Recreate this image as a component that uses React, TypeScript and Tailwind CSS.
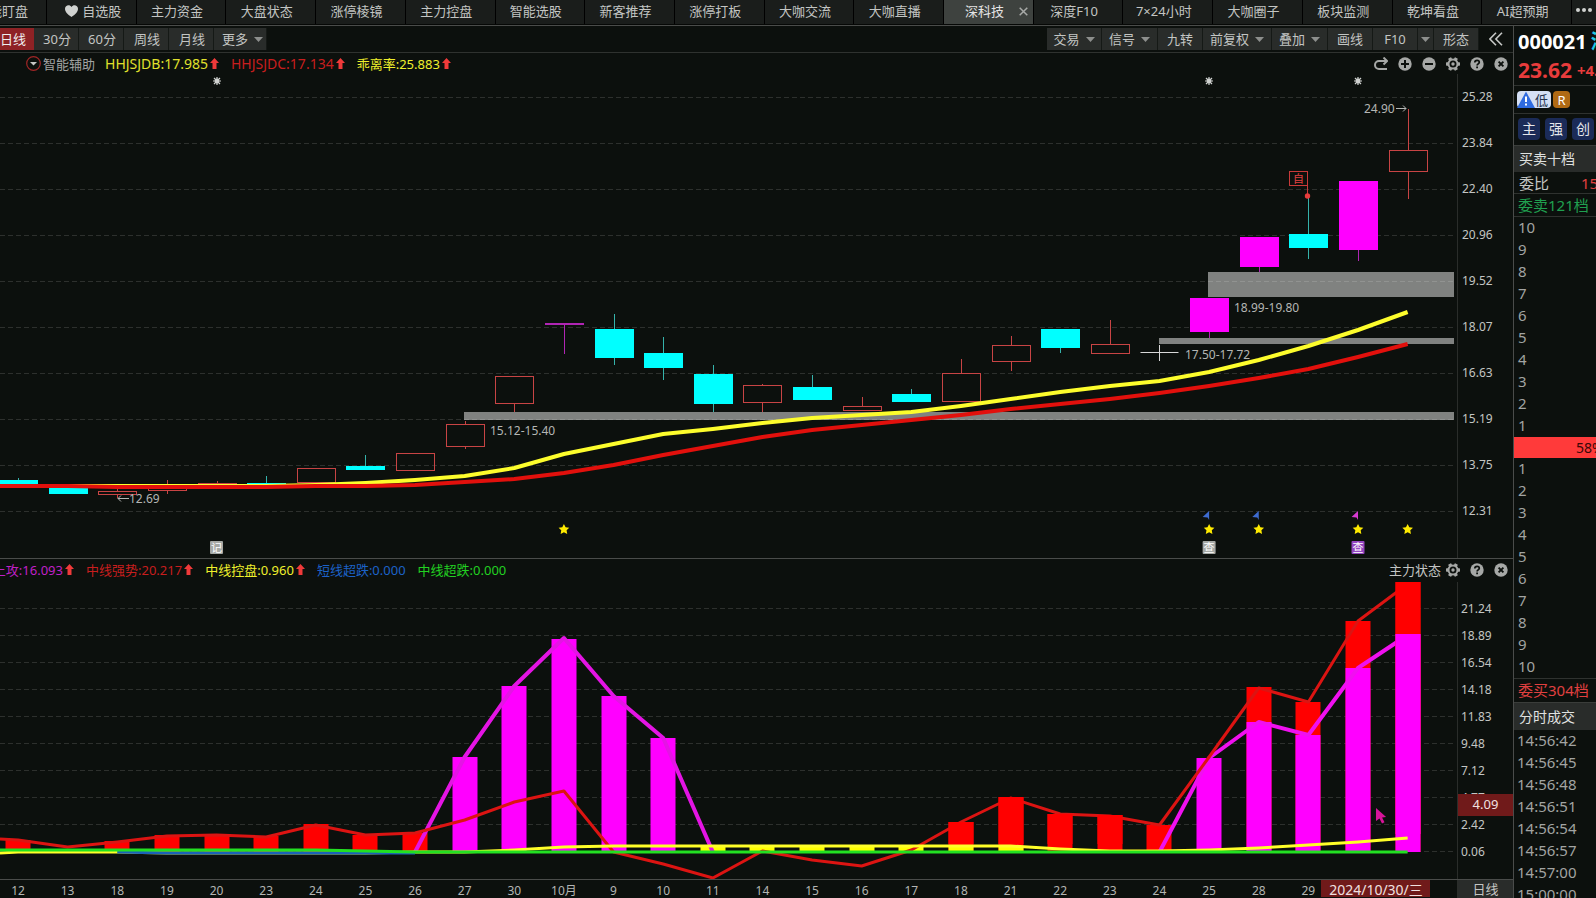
import type { ReactNode } from "react"
import clsx from "clsx"

const STEP = 49.63
const cx = (i: number) => 18 + STEP * i

type Kind = "up" | "down" | "limit" | "flat"
// [kind, high, body top, body bottom, low]
const CANDLES: [Kind, number, number, number, number][] = [
  ["down", 478, 480, 484, 484],
  ["down", 488, 488, 494, 494],
  ["up", 488, 491, 495, 498],
  ["up", 480, 487, 491, 494],
  ["up", 481, 483, 487, 487],
  ["down", 476, 483, 485, 485],
  ["up", 468, 468, 483, 483],
  ["down", 455, 466, 470, 470],
  ["up", 453, 453, 471, 471],
  ["up", 421, 424, 447, 449],
  ["up", 376, 376, 404, 412],
  ["limit", 323, 323, 325, 354],
  ["down", 314, 329, 358, 365],
  ["down", 337, 353, 368, 380],
  ["down", 365, 374, 404, 412],
  ["up", 384, 385, 403, 412],
  ["down", 375, 387, 400, 400],
  ["up", 397, 406, 411, 411],
  ["down", 389, 394, 402, 402],
  ["up", 359, 373, 402, 402],
  ["up", 336, 345, 362, 371],
  ["down", 329, 329, 348, 353],
  ["up", 320, 344, 354, 354],
  ["flat", 345, 352, 352, 361],
  ["limit", 298, 298, 332, 338],
  ["limit", 237, 237, 267, 272],
  ["down", 198, 234, 248, 259],
  ["limit", 181, 181, 250, 261],
  ["up", 109, 150, 172, 199],
]

const MA_FAST = [
  486, 486, 486, 486, 486, 486, 485, 483, 480, 476, 468, 454, 444, 434, 429, 423, 418, 415, 412,
  406, 399, 392, 386, 381, 372, 360, 346, 330, 312,
]
const MA_SLOW = [
  486, 486, 487, 487, 487, 487, 486, 486, 485, 482, 479, 473, 465, 455, 446, 437, 430, 425, 420,
  415, 409, 404, 399, 393, 386, 378, 369, 357, 344,
]

const BASE = 852
// [column, top, colour], painted in order
const BARS: [number, number, string][] = [
  [0, 840, "#f00"], [2, 841, "#f00"], [3, 835, "#f00"], [4, 834, "#f00"], [5, 836, "#f00"],
  [6, 824, "#f00"], [7, 835, "#f00"], [8, 833, "#f00"],
  [9, 757, "#f0f"], [10, 686, "#f0f"], [11, 639, "#f0f"], [12, 696, "#f0f"], [13, 738, "#f0f"],
  [14, 846, "#ff0"], [15, 846, "#ff0"], [16, 846, "#ff0"], [17, 846, "#ff0"], [18, 846, "#ff0"],
  [19, 822, "#f00"], [20, 797, "#f00"], [19, 846, "#ff0"], [20, 846, "#ff0"],
  [21, 814, "#f00"], [22, 815, "#f00"], [23, 825, "#f00"],
  [24, 758, "#f0f"],
  [25, 687, "#f00"], [25, 722, "#f0f"],
  [26, 702, "#f00"], [26, 735, "#f0f"],
  [27, 621, "#f00"], [27, 668, "#f0f"],
  [28, 582, "#f00"], [28, 634, "#f0f"],
]
const STRONG = [
  840, 847, 842, 836, 835, 837, 825, 835, 833, 820, 802, 791, 852, 864, 878, 851, 860, 866, 850,
  822, 798, 814, 816, 825, 757, 688, 702, 621, 584,
]
const CONTROL = [
  852, 852, 852, 853, 853, 853, 853, 853, 852, 852, 850, 847, 846, 846, 846, 846, 846, 846, 846,
  846, 846, 849, 851, 851, 850, 848, 845, 842, 838,
]
const OVERSOLD = [
  850, 850, 850, 850, 850, 850, 850, 851, 852, 852, 852, 852, 852, 852, 852, 852, 852, 852, 852,
  852, 852, 852, 852, 852, 852, 852, 852, 852, 852,
]

const line = (ys: number[], from = 0) => ys.map((y, i) => `${cx(i + from)},${y}`).join(" ")

const DATES = [
  "12", "13", "18", "19", "20", "23", "24", "25", "26", "27", "30", "10月", "9", "10", "11", "14",
  "15", "16", "17", "18", "21", "22", "23", "24", "25", "28", "29",
]

const TABS = [
  "自选股", "主力资金", "大盘状态", "涨停棱镜", "主力控盘", "智能选股", "新客推荐", "涨停打板",
  "大咖交流", "大咖直播", "深科技", "深度F10", "7×24小时", "大咖圈子", "板块监测", "乾坤看盘",
  "AI超预期",
]

const PRICES = ["25.28", "23.84", "22.40", "20.96", "19.52", "18.07", "16.63", "15.19", "13.75", "12.31"]
const LEVELS = ["21.24", "18.89", "16.54", "14.18", "11.83", "9.48", "7.12", "4.77", "2.42", "0.06"]
const TIMES = [
  "14:56:42", "14:56:45", "14:56:48", "14:56:51", "14:56:54", "14:56:57", "14:57:00", "15:00:00",
]

function Caret() {
  return (
    <svg className="h-[5px] w-[9px] shrink-0" viewBox="0 0 9 5" aria-hidden="true">
      <path d="M0 0h9L4.500 5z" fill="#8d8f8d" />
    </svg>
  )
}

function UpArrow() {
  return (
    <svg className="h-[11px] w-[9px] shrink-0" viewBox="0 0 9 11" aria-hidden="true">
      <path d="M4.500 0 9 5H6.500v6h-4V5H0z" fill="#f03a3a" />
    </svg>
  )
}

function IconButton({ label, children }: { label: string; children: ReactNode }) {
  return (
    <button aria-label={label} className="flex h-5 w-6 items-center justify-center">
      <svg className="size-[14px]" viewBox="0 0 14 14" fill="none" aria-hidden="true">
        {children}
      </svg>
    </button>
  )
}

function Gear() {
  return (
    <IconButton label="设置">
      <circle cx="7" cy="7" r="4.500" stroke="#a6a8a6" strokeWidth="2" />
      <circle cx="7" cy="7" r="1.700" fill="#a6a8a6" />
      {[0, 60, 120, 180, 240, 300].map((a) => (
        <rect key={a} x="5.300" y="0" width="3.400" height="2.600" rx="0.600" fill="#a6a8a6" transform={`rotate(${a + 30} 7 7)`} />
      ))}
    </IconButton>
  )
}

function Help() {
  return (
    <IconButton label="帮助">
      <circle cx="7" cy="7" r="6.700" fill="#a6a8a6" />
      <path d="M4.800 5.600c0-3 4.500-3 4.500-.3 0 1.500-2.200 1.600-2.200 3.100" stroke="#0c100d" strokeWidth="1.700" />
      <path d="M7.100 9.500v1.800" stroke="#0c100d" strokeWidth="1.800" />
    </IconButton>
  )
}

function Close() {
  return (
    <IconButton label="关闭">
      <circle cx="7" cy="7" r="6.700" fill="#a6a8a6" />
      <path d="m4.600 4.600 4.800 4.800m0-4.800-4.800 4.800" stroke="#0c100d" strokeWidth="1.900" />
    </IconButton>
  )
}

function Legend({ color, children, up }: { color: string; children: ReactNode; up?: boolean }) {
  return (
    <span className={clsx("flex items-center gap-[2px] whitespace-nowrap", color)}>
      {children}
      {up && <UpArrow />}
    </span>
  )
}

function Tool({ width, children, menu }: { width: string; children?: ReactNode; menu?: boolean }) {
  return (
    <button
      className={clsx(
        "flex h-[22px] shrink-0 items-center justify-center gap-[6px] overflow-hidden border-r border-[#151916] bg-[#292c2a] whitespace-nowrap",
        width,
      )}
    >
      {children}
      {menu && <Caret />}
    </button>
  )
}

function TabBar() {
  return (
    <nav className="flex h-[26px] border-b border-[#4a4c4a] bg-[#060806] pb-px">
      <button className="flex w-[47px] shrink-0 items-center justify-end overflow-hidden border-r border-black bg-[#1a1d1b] pr-[18px] pb-0.5 whitespace-nowrap">
        智能盯盘
      </button>
      {TABS.map((tab) => {
        const current = tab === "深科技"
        return (
          <button
            key={tab}
            className={clsx(
              "relative flex min-w-0 flex-1 items-center justify-center gap-1 overflow-hidden border-r border-black pb-0.5 whitespace-nowrap",
              current ? "bg-[#3e423f] text-[#e4e4e4]" : "bg-[#1a1d1b]",
              tab === "自选股" ? "pr-[2px] pl-[6px]" : "pr-[8px]",
            )}
          >
            {tab === "自选股" && (
              <svg className="h-3 w-[13px]" viewBox="0 0 13 12" aria-hidden="true">
                <path d="M6.500 12C3 9.500 0 7 0 3.700 0 .2 4.700-1.200 6.500 2 8.300-1.200 13 .2 13 3.700 13 7 10 9.500 6.500 12Z" fill="#d0d2d0" />
              </svg>
            )}
            {tab}
            {current && (
              <svg className="absolute right-[5px] size-[9px]" viewBox="0 0 9 9" aria-hidden="true">
                <path d="m.7.7 7.600 7.600m0-7.600L.7 8.300" stroke="#a8aaa8" strokeWidth="1.500" />
              </svg>
            )}
          </button>
        )
      })}
      <button aria-label="更多标签" className="flex w-6 shrink-0 items-center gap-[2px] overflow-hidden bg-[#1a1d1b] pb-1 pl-1">
        {[0, 1, 2].map((i) => (
          <span key={i} className="size-1 shrink-0 rounded-full bg-[#d0d2d0]" />
        ))}
      </button>
    </nav>
  )
}

function Toolbar() {
  return (
    <div className="flex h-[27px] items-center border-b border-[#2f322f]">
      <button className="flex h-[22px] w-[34px] shrink-0 items-center justify-end overflow-hidden bg-[#8e2225] pr-[8px] whitespace-nowrap text-[#eee]">
        日线
      </button>
      <Tool width="w-[45px] pl-[2px]">30分</Tool>
      <Tool width="w-[45px] pl-[2px]">60分</Tool>
      <Tool width="w-[45px] pl-[2px]">周线</Tool>
      <Tool width="w-[45px] pl-[2px]">月线</Tool>
      <Tool width="w-[53px] pl-[5px]" menu>更多</Tool>
      <div className="flex-1" />
      <Tool width="w-[55px]" menu>交易</Tool>
      <Tool width="w-[56px]" menu>信号</Tool>
      <Tool width="w-[45px]">九转</Tool>
      <Tool width="w-[69px]" menu>前复权</Tool>
      <Tool width="w-[56px]" menu>叠加</Tool>
      <Tool width="w-[45px]">画线</Tool>
      <Tool width="w-[45px]">F10</Tool>
      <Tool width="w-[16px]" menu />
      <Tool width="w-[45px]">形态</Tool>
      <button aria-label="收起" className="flex w-[34px] justify-center">
        <svg className="size-[14px]" viewBox="0 0 14 14" fill="none" stroke="#c6c8c6" strokeWidth="1.600" aria-hidden="true">
          <path d="M7 .8.9 7 7 13.200M13 .8 6.900 7l6.100 6.200" />
        </svg>
      </button>
    </div>
  )
}

const INK: Record<Kind, string> = { up: "#c84444", down: "#0ff", limit: "#f0f", flat: "#d8d8d8" }
const WICK: Record<Kind, string> = { up: "#c84444", down: "#35b3ab", limit: "#b025b4", flat: "#d8d8d8" }

function Candle({ i }: { i: number }) {
  const [kind, high, top, bottom, low] = CANDLES[i]
  const x = Math.round(cx(i)) + 0.5
  return (
    <g>
      <path d={`M${x} ${high}V${top}M${x} ${bottom}V${low}`} stroke={WICK[kind]} />
      {kind === "up" && (
        <rect x={x - 19} y={top + 0.5} width="38" height={bottom - top - 1} fill="none" stroke={INK.up} />
      )}
      {(kind === "down" || kind === "limit") && (
        <rect x={x - 19.5} y={top} width="39" height={bottom - top} fill={i === 11 ? WICK.limit : INK[kind]} />
      )}
      {kind === "flat" && <path d={`M${x - 19} ${top + 0.5}h38`} stroke={INK.flat} />}
    </g>
  )
}

function Burst({ x }: { x: number }) {
  return (
    <g stroke="#d0d2d0" strokeWidth="1.200">
      <path d={`M${x - 4} 81h8M${x} 77v8M${x - 3} 78l6 6M${x + 3} 78l-6 6`} />
      <circle cx={x} cy="81" r="1.800" fill="#d0d2d0" />
    </g>
  )
}

function Star({ x }: { x: number }) {
  const pts = Array.from({ length: 10 }, (_, k) => {
    const r = k % 2 ? 2.8 : 5.6
    const a = (Math.PI / 5) * k - Math.PI / 2
    return `${x + r * Math.cos(a)},${529.5 + r * Math.sin(a)}`
  })
  return <polygon points={pts.join(" ")} fill="#ffeb00" />
}

function Badge({ x, fill, children }: { x: number; fill: string; children: string }) {
  return (
    <g>
      <rect x={x - 6.5} y="541" width="13" height="13" rx="1" fill={fill} />
      <text x={x} y="551.500" fontSize="11" textAnchor="middle" fill="#fff">{children}</text>
    </g>
  )
}

function PriceChart() {
  return (
    <svg className="block h-auto w-full min-w-0 flex-1" viewBox="0 74 1457 484" role="img" aria-label="K线图">
      <g stroke="#2d302d" strokeDasharray="5 3">
        {PRICES.map((p, i) => (
          <path key={p} d={`M0 ${97.5 + i * 46}H1453`} />
        ))}
      </g>
      <g fill="#fff" fillOpacity="0.48">
        <rect x="464" y="412" width="990" height="8" />
        <rect x="1159" y="338" width="295" height="6" />
        <rect x="1208" y="272" width="246" height="25" />
      </g>
      {CANDLES.map((_, i) => (
        <Candle key={i} i={i} />
      ))}
      <g fontSize="12" fill="#b4b6b4">
        <text x="490" y="435">15.12-15.40</text>
        <text x="1234" y="312">18.99-19.80</text>
        <text x="1185" y="359">17.50-17.72</text>
        <text x="1364" y="113">24.90</text>
        <text x="129" y="503">12.69</text>
      </g>
      <path d="M1396 108.500h10m-3-3 3 3-3 3M129 498.500h-11m3-3-3 3 3 3" fill="none" stroke="#b4b6b4" />
      <g fill="none" strokeWidth="4" strokeLinejoin="round">
        <polyline points={`0,486 ${line(MA_FAST)}`} stroke="#fdfd2c" />
        <polyline points={`0,486 ${line(MA_SLOW)}`} stroke="#e2100c" />
      </g>
      <rect x="1289.500" y="171.500" width="18" height="14" fill="none" stroke="#c83a3a" />
      <path d="M1307.500 185v10" stroke="#c83a3a" />
      <circle cx="1307.500" cy="196" r="2.700" fill="#e83c3c" />
      <text x="1298.500" y="182.500" fontSize="11" textAnchor="middle" fill="#e04040">自</text>
      {[4, 24, 27].map((i) => (
        <Burst key={i} x={Math.round(cx(i))} />
      ))}
      {[11, 24, 25, 27, 28].map((i) => (
        <Star key={i} x={cx(i)} />
      ))}
      {[24, 25, 27].map((i) => (
        <path key={i} d={`M${cx(i)} 511v9l-1.500-2.500-5-.500z`} fill={i === 27 ? "#d63ad0" : "#3d6bd0"} />
      ))}
      <Badge x={cx(4)} fill="#a5a8a5">记</Badge>
      <Badge x={cx(24)} fill="#a5a8a5">查</Badge>
      <Badge x={cx(27)} fill="#9446c0">查</Badge>
    </svg>
  )
}

function StateChart() {
  return (
    <svg className="block h-auto w-full min-w-0 flex-1" viewBox="0 582 1457 297" role="img" aria-label="主力状态图">
      <g stroke="#2d302d" strokeDasharray="5 3">
        {LEVELS.map((p, i) => (
          <path key={p} d={`M0 ${608.5 + i * 27}H1453`} />
        ))}
      </g>
      {BARS.map(([i, top, fill], k) => (
        <rect key={k} x={Math.round(cx(i)) - 12.5} y={top} width="25" height={BASE - top} fill={fill} />
      ))}
      <g fill="none" strokeLinejoin="round">
        <polyline points={line([852, 757, 686, 638, 696, 738, 852], 8)} stroke="#e414e4" strokeWidth="4" />
        <polyline points={line([852, 758, 722, 735, 668, 635], 23)} stroke="#f010f0" strokeWidth="4" />
        <polyline points={`0,839 ${line(STRONG)}`} stroke="#dc1412" strokeWidth="3" />
        <polyline points={`0,853 ${line(CONTROL)}`} stroke="#ffff28" strokeWidth="3" />
        <polyline points={line([852, 853, 853, 853, 853, 853, 853], 2)} stroke="#1b62b8" strokeWidth="3" />
        <polyline points={`0,850 ${line(OVERSOLD)}`} stroke="#22e022" strokeWidth="3" />
      </g>
      {/* bars that sit above the red line */}
      {BARS.filter(([i, , fill]) => i === 28 || (i > 18 && i < 23 && fill === "#f00")).map(([i, top, fill], k) => (
        <rect key={k} x={Math.round(cx(i)) - 12.5} y={top} width="25" height={(i === 28 ? 834 : 844) - top} fill={fill} />
      ))}
      <path d="M1376 808v13l3.500-2.500 2.500 5 2.500-1.200-2.400-4.800 4-.5z" fill="#d8149a" />
    </svg>
  )
}

function DateAxis() {
  return (
    <svg className="block h-auto w-full min-w-0 flex-1" viewBox="0 0 1457 18" fontSize="12" textAnchor="middle" fill="#b4b6b4">
      {DATES.map((d, i) => (
        <text key={i} x={cx(i)} y="15">{d}</text>
      ))}
      <rect x="1321" y="0" width="109" height="17" fill="#701a1a" />
      <text x="1376" y="15" fontSize="14" fill="#f0e0e0">2024/10/30/三</text>
    </svg>
  )
}

function Depth({ levels }: { levels: number[] }) {
  return (
    <ul className="text-[15px] text-[#a2a4a2]">
      {levels.map((n) => (
        <li key={n} className="flex h-[22px] items-center pb-0.5 pl-1">{n}</li>
      ))}
    </ul>
  )
}

function Quote() {
  const down = [10, 9, 8, 7, 6, 5, 4, 3, 2, 1]
  return (
    <aside className="w-[83px] shrink-0 overflow-hidden border-l border-[#4a4c4a] whitespace-nowrap">
      <div className="flex h-8 items-center pl-1 text-xl font-bold text-white">
        000021<span className="pl-1 text-[#20c8e8]">深科技</span>
      </div>
      <div className="flex h-7 items-center gap-[5px] border-b border-[#2f322f] pb-1 pl-1 font-bold text-[#e83c3c]">
        <span className="text-[21px]">23.62</span>
        <span className="text-[15px]">+4.47%</span>
      </div>
      <div className="flex h-7 items-center gap-[2px] border-b border-[#2f322f] pl-[3px]">
        <span className="flex h-[17px] w-[34px] items-center rounded-sm bg-[#d4dff4] text-[13px] text-[#26344e]">
          <svg className="h-[17px] w-[18px] shrink-0" viewBox="0 0 18 17" aria-hidden="true">
            <path d="M9 .5 18 17H0z" fill="#2f6be0" />
            <path d="M9 5.500v5.500M9 12.500v2" stroke="#fff" strokeWidth="2" />
          </svg>
          低
        </span>
        <span className="flex size-[17px] items-center justify-center rounded-sm bg-[#b06a14] text-[13px] text-white">R</span>
      </div>
      <div className="flex h-[31px] items-center gap-[5px] pb-0.5 pl-1 text-sm text-[#e4e6ea]">
        {["主", "强", "创"].map((t) => (
          <button key={t} className="flex size-[22px] shrink-0 items-center justify-center rounded-sm bg-[#1b2b58]">{t}</button>
        ))}
      </div>
      <h2 className="flex h-[27px] items-center border-t border-[#3a3d3a] bg-[#292c2a] pl-[5px] text-sm text-[#e0e2e0]">买卖十档</h2>
      <div className="flex h-[22px] items-center gap-[32px] border-b border-[#2f322f] pl-[5px] text-[15px]">
        委比<span className="text-[#e04040]">15.36%</span>
      </div>
      <div className="flex h-[23px] items-center border-b border-[#2f322f] pl-1 text-[15px] text-[#20a050]">委卖121档</div>
      <Depth levels={down} />
      <div className="flex h-[21px] items-center bg-[#ff3a3a] pl-[62px] text-sm text-[#3a0808]">58%</div>
      <Depth levels={[...down].reverse()} />
      <div className="flex h-6 items-center border-t border-[#2f322f] pb-0.5 pl-1 text-[15px] text-[#e04040]">委买304档</div>
      <h2 className="flex h-7 items-center border-t border-[#3a3d3a] bg-[#292c2a] pl-[5px] text-sm text-[#e0e2e0]">分时成交</h2>
      <ul className="text-[15px] text-[#a2a4a2]">
        {TIMES.map((t) => (
          <li key={t} className="flex h-[22px] items-center pb-0.5 pl-[3px]">{t}</li>
        ))}
      </ul>
    </aside>
  )
}

export default function App() {
  return (
    <div className="h-screen overflow-hidden bg-[#0c100d] font-['Noto_Sans','Noto_Sans_CJK_SC',sans-serif] text-[13px] leading-5 text-[#c3c5c3]">
      <TabBar />
      <div className="flex">
        <main className="min-w-0 flex-1">
          <Toolbar />

          <section>
            <header className="flex h-[21px] items-center gap-[10px]">
              <span className="flex items-center gap-[2px] pl-[26px] text-[#a2a4a2]">
                <svg className="size-[15px]" viewBox="0 0 15 15" fill="none" aria-hidden="true">
                  <circle cx="7.500" cy="7.500" r="6.800" stroke="#a02626" strokeWidth="1.200" />
                  <path d="M4 6h7L7.500 9.500z" fill="#c6c8c6" />
                </svg>
                智能辅助
              </span>
              <div className="flex gap-3">
                <Legend color="text-sm text-[#e0e02c]" up>HHJSJDB:17.985</Legend>
                <Legend color="text-sm text-[#c81e1e]" up>HHJSJDC:17.134</Legend>
                <Legend color="text-[#f0f02c]" up>乖离率:25.883</Legend>
              </div>
              <div className="flex-1" />
              <div className="flex">
                <IconButton label="撤销">
                  <path d="M13 4H5a3.600 3.600 0 0 0 0 8h8M9.500.5 13.200 4 9.500 7.500" stroke="#a6a8a6" strokeWidth="2" />
                </IconButton>
                <IconButton label="放大">
                  <circle cx="7" cy="7" r="6.700" fill="#a6a8a6" />
                  <path d="M7 3v8M3 7h8" stroke="#0c100d" strokeWidth="2" />
                </IconButton>
                <IconButton label="缩小">
                  <circle cx="7" cy="7" r="6.700" fill="#a6a8a6" />
                  <path d="M3 7h8" stroke="#0c100d" strokeWidth="2" />
                </IconButton>
                <Gear />
                <Help />
                <Close />
              </div>
            </header>
            <div className="flex">
              <PriceChart />
              <div className="w-14 shrink-0 border-l border-[#2a2d2a] pl-1 text-xs">
                {PRICES.map((p) => (
                  <div key={p} className="flex h-[46px] items-center">{p}</div>
                ))}
              </div>
            </div>
          </section>

          <section className="border-t border-[#4a4c4a]">
            <header className="flex h-[23px] items-center gap-3 pb-0.5">
              <div className="flex w-[74px] justify-end overflow-hidden">
                <Legend color="text-[#c020c8]" up>上攻:16.093</Legend>
              </div>
              <Legend color="text-[#c81e1e]" up>中线强势:20.217</Legend>
              <Legend color="text-[#f0f02c]" up>中线控盘:0.960</Legend>
              <Legend color="text-[#1c62c8]">短线超跌:0.000</Legend>
              <Legend color="text-[#22d022]">中线超跌:0.000</Legend>
              <div className="flex-1" />
              <div className="flex">
                主力状态
                <Gear />
                <Help />
                <Close />
              </div>
            </header>
            <div className="flex">
              <StateChart />
              <div className="relative w-14 shrink-0 border-l border-[#2a2d2a] pt-[13px] pl-[3px] text-xs">
                {LEVELS.map((p) => (
                  <div key={p} className="flex h-[27px] items-center">{p}</div>
                ))}
                <div className="absolute top-[212px] right-0 left-0 flex h-[22px] items-center justify-center bg-[#701a1a] text-[13px] text-[#f0e0e0]">
                  4.09
                </div>
              </div>
            </div>
          </section>

          <footer className="flex h-[19px] border-t border-[#4a4c4a]">
            <DateAxis />
            <button className="flex w-14 shrink-0 items-center justify-center border-l border-[#2a2d2a] bg-[#292c2a]">日线</button>
          </footer>
        </main>
        <Quote />
      </div>
    </div>
  )
}
